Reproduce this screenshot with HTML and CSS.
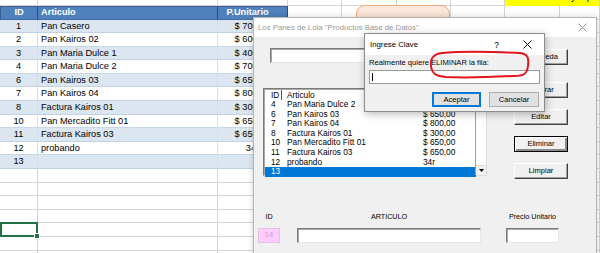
FILE: index.html
```html
<!DOCTYPE html>
<html lang="es">
<head>
  <meta charset="UTF-8">
  <meta name="viewport" content="width=device-width, initial-scale=1.0">
  <title>Los Panes de Lola - Productos</title>
  <link rel="stylesheet" href="styles.css">
</head>
<body>

  <!-- Hoja de calculo -->
  <div class="sheet">
    <div class="row top">
      <div class="cell"></div><div class="cell"></div><div class="cell"></div>
      <div class="cell"></div><div class="cell"></div><div class="cell"></div>
      <div class="cell"></div>
      <div class="cell yellow"><span>y p</span></div>
    </div>
    <div class="row head">
      <div class="cell id">ID</div><div class="cell art">Articulo</div><div class="cell pr">P.Unitario</div>
      <div class="cell"></div><div class="cell"></div><div class="cell"></div>
      <div class="cell"></div><div class="cell"></div><div class="cell"></div>
    </div>
    <div class="row band">
      <div class="cell id">1</div><div class="cell art">Pan Casero</div><div class="cell pr">$ 700,00</div>
      <div class="cell"></div><div class="cell"></div><div class="cell"></div><div class="cell"></div><div class="cell"></div><div class="cell"></div>
    </div>
    <div class="row">
      <div class="cell id">2</div><div class="cell art">Pan Kairos 02</div><div class="cell pr">$ 600,00</div>
      <div class="cell"></div><div class="cell"></div><div class="cell"></div><div class="cell"></div><div class="cell"></div><div class="cell"></div>
    </div>
    <div class="row band">
      <div class="cell id">3</div><div class="cell art">Pan Maria Dulce 1</div><div class="cell pr">$ 400,00</div>
      <div class="cell"></div><div class="cell"></div><div class="cell"></div><div class="cell"></div><div class="cell"></div><div class="cell"></div>
    </div>
    <div class="row">
      <div class="cell id">4</div><div class="cell art">Pan Maria Dulce 2</div><div class="cell pr">$ 700,00</div>
      <div class="cell"></div><div class="cell"></div><div class="cell"></div><div class="cell"></div><div class="cell"></div><div class="cell"></div>
    </div>
    <div class="row band">
      <div class="cell id">6</div><div class="cell art">Pan Kairos 03</div><div class="cell pr">$ 650,00</div>
      <div class="cell"></div><div class="cell"></div><div class="cell"></div><div class="cell"></div><div class="cell"></div><div class="cell"></div>
    </div>
    <div class="row">
      <div class="cell id">7</div><div class="cell art">Pan Kairos 04</div><div class="cell pr">$ 800,00</div>
      <div class="cell"></div><div class="cell"></div><div class="cell"></div><div class="cell"></div><div class="cell"></div><div class="cell"></div>
    </div>
    <div class="row band">
      <div class="cell id">8</div><div class="cell art">Factura Kairos 01</div><div class="cell pr">$ 300,00</div>
      <div class="cell"></div><div class="cell"></div><div class="cell"></div><div class="cell"></div><div class="cell"></div><div class="cell"></div>
    </div>
    <div class="row">
      <div class="cell id">10</div><div class="cell art">Pan Mercadito Fitt 01</div><div class="cell pr">$ 650,00</div>
      <div class="cell"></div><div class="cell"></div><div class="cell"></div><div class="cell"></div><div class="cell"></div><div class="cell"></div>
    </div>
    <div class="row band">
      <div class="cell id">11</div><div class="cell art">Factura Kairos 03</div><div class="cell pr">$ 650,00</div>
      <div class="cell"></div><div class="cell"></div><div class="cell"></div><div class="cell"></div><div class="cell"></div><div class="cell"></div>
    </div>
    <div class="row">
      <div class="cell id">12</div><div class="cell art">probando</div><div class="cell pr">34r</div>
      <div class="cell"></div><div class="cell"></div><div class="cell"></div><div class="cell"></div><div class="cell"></div><div class="cell"></div>
    </div>
    <div class="row band">
      <div class="cell id">13</div><div class="cell art"></div><div class="cell pr"></div>
      <div class="cell"></div><div class="cell"></div><div class="cell"></div><div class="cell"></div><div class="cell"></div><div class="cell"></div>
    </div>
    <div class="row empty">
      <div class="cell"></div><div class="cell"></div><div class="cell"></div><div class="cell"></div><div class="cell"></div><div class="cell"></div><div class="cell"></div><div class="cell"></div><div class="cell"></div>
    </div>
    <div class="row empty">
      <div class="cell"></div><div class="cell"></div><div class="cell"></div><div class="cell"></div><div class="cell"></div><div class="cell"></div><div class="cell"></div><div class="cell"></div><div class="cell"></div>
    </div>
    <div class="row empty">
      <div class="cell"></div><div class="cell"></div><div class="cell"></div><div class="cell"></div><div class="cell"></div><div class="cell"></div><div class="cell"></div><div class="cell"></div><div class="cell"></div>
    </div>
    <div class="row empty">
      <div class="cell"></div><div class="cell"></div><div class="cell"></div><div class="cell"></div><div class="cell"></div><div class="cell"></div><div class="cell"></div><div class="cell"></div><div class="cell"></div>
    </div>
    <div class="row empty">
      <div class="cell selected"></div><div class="cell"></div><div class="cell"></div><div class="cell"></div><div class="cell"></div><div class="cell"></div><div class="cell"></div><div class="cell"></div><div class="cell"></div>
    </div>
    <div class="row empty">
      <div class="cell"></div><div class="cell"></div><div class="cell"></div><div class="cell"></div><div class="cell"></div><div class="cell"></div><div class="cell"></div><div class="cell"></div><div class="cell"></div>
    </div>
    <div class="row empty">
      <div class="cell"></div><div class="cell"></div><div class="cell"></div><div class="cell"></div><div class="cell"></div><div class="cell"></div><div class="cell"></div><div class="cell"></div><div class="cell"></div>
    </div>
  </div>

  <!-- Forma (boton de la hoja) -->
  <div class="shape-btn"></div>

  <!-- UserForm principal -->
  <div class="form">
    <div class="form-title">
      <span>Los Panes de Lola "Productos Base de Datos"</span>
      <svg class="close" width="9" height="9" viewBox="0 0 9 9"><path d="M0.5 0.5L8.5 8.5M8.5 0.5L0.5 8.5" stroke="#9a9a9a" stroke-width="1"/></svg>
    </div>
    <div class="form-body">
      <div class="form-top">
        <div class="form-left">
          <div class="textbox search"></div>
          <div class="listbox">
            <div class="lb-head"><span class="c-id">ID</span><span class="c-art">Articulo</span></div>
            <div class="lb-row"><span class="c-id">4</span><span class="c-art">Pan Maria Dulce 2</span><span class="c-pr">$ 700,00</span></div>
            <div class="lb-row"><span class="c-id">6</span><span class="c-art">Pan Kairos 03</span><span class="c-pr">$ 650,00</span></div>
            <div class="lb-row"><span class="c-id">7</span><span class="c-art">Pan Kairos 04</span><span class="c-pr">$ 800,00</span></div>
            <div class="lb-row"><span class="c-id">8</span><span class="c-art">Factura Kairos 01</span><span class="c-pr">$ 300,00</span></div>
            <div class="lb-row"><span class="c-id">10</span><span class="c-art">Pan Mercadito Fitt 01</span><span class="c-pr">$ 650,00</span></div>
            <div class="lb-row"><span class="c-id">11</span><span class="c-art">Factura Kairos 03</span><span class="c-pr">$ 650,00</span></div>
            <div class="lb-row"><span class="c-id">12</span><span class="c-art">probando</span><span class="c-pr">34r</span></div>
            <div class="lb-row active"><span class="c-id">13</span><span class="c-art"></span><span class="c-pr"></span></div>
            <div class="lb-scroll">
              <div class="lb-arrow">
                <svg width="5" height="3" viewBox="0 0 5 3"><path d="M0 0H5L2.5 3Z" fill="#000"/></svg>
              </div>
            </div>
          </div>
        </div>
        <div class="form-buttons">
          <div class="btn first">Búsqueda</div>
          <div class="btn">Mostrar</div>
          <div class="btn">Editar</div>
          <div class="btn default">Eliminar</div>
          <div class="btn">Limpiar</div>
        </div>
      </div>
      <div class="form-bottom">
        <div class="field f-id"><div class="label">ID</div><div class="textbox pink">14</div></div>
        <div class="field f-art"><div class="label">ARTICULO</div><div class="textbox"></div></div>
        <div class="field f-pr"><div class="label">Precio Unitario</div><div class="textbox"></div></div>
      </div>
    </div>
  </div>

  <!-- InputBox "Ingrese Clave" -->
  <div class="prompt">
    <div class="prompt-title">
      <span>Ingrese Clave</span>
      <span class="help">?</span>
      <svg class="close" width="9" height="9" viewBox="0 0 9 9"><path d="M0.5 0.5L8.5 8.5M8.5 0.5L0.5 8.5" stroke="#111" stroke-width="1"/></svg>
    </div>
    <div class="prompt-body">
      <div class="prompt-text">Realmente quiere ELIMINAR la fila:</div>
      <div class="prompt-input"><span class="caret"></span></div>
      <div class="prompt-buttons">
        <div class="pbtn ok">Aceptar</div>
        <div class="pbtn">Cancelar</div>
      </div>
    </div>
  </div>

  <!-- Marca roja a mano -->
  <svg class="mark" width="104" height="30" viewBox="0 0 104 30">
    <path d="M14 3 C35 1 70 2 92 3 C100 4 101 8 100 16 C99 24 96 26 86 26 C65 27 35 28 18 27 C8 26 4 24 3 16 C2 9 5 4 14 3 Z" fill="none" stroke="#e2141c" stroke-width="2"/>
  </svg>

</body>
</html>
```

FILE: styles.css
```css
/* Basic Styles */
* {
  margin: 0;
  padding: 0;
  box-sizing: border-box;
}

body {
  width: 600px;
  height: 253px;
  overflow: hidden;
  position: relative;
  background-color: #fff;
  font-family: 'Liberation Sans', Arial, sans-serif;
}

/* Sheet */
.sheet {
  font-size: 9.2px;
  color: #000;
}

.row {
  display: grid;
  grid-template-columns: 38px 180px 70px 54px 55px 54px 54px 55px 40px;
  height: 13.6px;
}

.row.top {
  height: 6px;
}

.row.head {
  height: 13.5px;
}

.cell {
  border-right: 1px solid #d4d4d4;
  border-bottom: 1px solid #d4d4d4;
  overflow: hidden;
  white-space: nowrap;
  line-height: 12.6px;
  padding: 0 3px;
}

.cell.yellow {
  grid-column: span 2;
  background-color: #ffff00;
  position: relative;
  border-bottom: none;
}

/* only the descenders of the cell text are visible */
.cell.yellow span {
  position: absolute;
  left: 66px;
  top: -8px;
  font-size: 10px;
  line-height: 10px;
  word-spacing: 8px;
}

.cell.id {
  text-align: center;
}

.cell.pr {
  text-align: center;
}

.row .cell.id,
.row .cell.art,
.row .cell.pr {
  border-bottom-color: #c8d6e8;
  border-right-color: #d6dee9;
}

.band .cell.id,
.band .cell.art,
.band .cell.pr {
  background-color: #dce6f1;
  border-bottom-color: #c2d2e6;
}

.head .cell.id,
.head .cell.art,
.head .cell.pr {
  background-color: #4f81bd;
  color: #fff;
  font-weight: bold;
  border-top: 1px solid #3a5f8e;
  border-right: 1px solid #2e4d74;
  border-bottom: 1px solid #3f6ca2;
  line-height: 11.5px;
}

.head .cell.id {
  border-left: 1px solid #3a5f8e;
}

.head .cell.pr {
  padding-left: 0;
  padding-right: 10px;
}

.cell.selected {
  position: relative;
  overflow: visible;
}

.cell.selected::before {
  content: "";
  position: absolute;
  left: 0;
  top: -1px;
  right: -1px;
  bottom: -1px;
  border: 2px solid #217346;
}

.cell.selected::after {
  content: "";
  position: absolute;
  right: -3px;
  bottom: -3px;
  width: 4px;
  height: 4px;
  background-color: #217346;
  border: 1px solid #fff;
}

/* Shape button on the sheet */
.shape-btn {
  position: absolute;
  left: 356px;
  top: 5px;
  width: 94px;
  height: 26px;
  border: 1px solid #f1a873;
  border-radius: 9px;
  background: linear-gradient(#fbeadf, #f9d9c4);
}

/* Main UserForm */
.form {
  position: absolute;
  left: 253px;
  top: 17px;
  width: 344px;
  height: 246px;
  background-color: #f0f0f0;
  border: 1px solid #b5b5b5;
  box-shadow: 0 0 6px rgba(0, 0, 0, 0.18);
}

.form-title {
  height: 19px;
  background-color: #fff;
  display: flex;
  align-items: center;
  padding-left: 4px;
  font-size: 7.8px;
  color: #9a9a9a;
}

.form-title .close {
  margin-left: auto;
  margin-right: 9px;
}

.form-body {
  padding-top: 11px;
  font-size: 7.5px;
}

.form-top {
  display: flex;
}

.form-left {
  width: 233px;
  padding-left: 9px;
}

.textbox {
  background-color: #fff;
  height: 15px;
  border-top: 1px solid #7a7a7a;
  border-left: 1px solid #7a7a7a;
  border-right: 1px solid #e6e6e6;
  border-bottom: 1px solid #e6e6e6;
  box-shadow: inset 1px 1px 0 #a9a9a9;
}

.textbox.search {
  width: 190px;
  margin-left: 7px;
}

.textbox.pink {
  background-color: #ffccff;
  color: #c99bc9;
  text-align: center;
  font-size: 7.5px;
  line-height: 12px;
  border-color: #e4c2e4;
  box-shadow: none;
}

/* Listbox */
.listbox {
  position: relative;
  margin-top: 25px;
  width: 224px;
  height: 88px;
  background-color: #fff;
  border-top: 1px solid #7a7a7a;
  border-left: 1px solid #7a7a7a;
  border-right: 1px solid #dcdcdc;
  border-bottom: 1px solid #dcdcdc;
  box-shadow: inset 1px 1px 0 #a9a9a9;
  padding-top: 1px;
  font-size: 8.3px;
}

.lb-head,
.lb-row {
  display: flex;
  height: 9.6px;
  line-height: 9.6px;
  padding-left: 7px;
  width: 212px;
  white-space: nowrap;
}

.lb-head {
  height: 10px;
  line-height: 10px;
}

.c-id {
  width: 16px;
}

.c-art {
  width: 136px;
}

.lb-head .c-id {
  border-right: 1px solid #555;
  width: 11px;
  margin-right: 5px;
}

.lb-row.active {
  background-color: #0078d7;
  color: #fff;
  margin-left: 1px;
  width: 211px;
  padding-left: 6px;
}

.lb-scroll {
  position: absolute;
  right: 0;
  top: 1px;
  bottom: 0;
  width: 11px;
  border-left: 1px solid #a0a0a0;
  display: flex;
  flex-direction: column;
  justify-content: flex-end;
}

.lb-arrow {
  height: 10px;
  display: flex;
  align-items: center;
  justify-content: center;
  background-color: #f0f0f0;
  border-top: 1px solid #dadada;
}

/* Buttons column */
.form-buttons {
  margin-left: 27px;
  padding-top: 1px;
  display: flex;
  flex-direction: column;
  gap: 11px;
}

.btn {
  width: 54px;
  height: 16px;
  line-height: 13px;
  text-align: center;
  background-color: #f0f0f0;
  border-top: 1px solid #fff;
  border-left: 1px solid #fff;
  border-right: 1px solid #404040;
  border-bottom: 1px solid #404040;
  box-shadow: inset -1px -1px 0 #a0a0a0;
  color: #000;
}

.btn.first {
  margin-bottom: 6px;
}

.btn.default {
  border: 1px solid #000;
  box-shadow: inset 1px 1px 0 #fff, inset -2px -2px 0 #8a8a8a;
}

/* Bottom fields */
.form-bottom {
  display: flex;
  margin-top: 33px;
  padding-left: 4px;
  font-size: 7.2px;
}

.field .label {
  height: 10px;
  line-height: 10px;
  text-align: center;
  margin-bottom: 6px;
  white-space: nowrap;
}

.f-id {
  width: 22px;
}

.f-art {
  width: 184px;
  margin-left: 17px;
}

.f-pr {
  width: 53px;
  margin-left: 25px;
}

/* InputBox */
.prompt {
  position: absolute;
  left: 364px;
  top: 33px;
  width: 181px;
  height: 79px;
  background-color: #f0f0f0;
  border: 1px solid #8c8c8c;
  box-shadow: 1px 2px 8px rgba(0, 0, 0, 0.28);
  font-size: 7.6px;
  color: #000;
}

.prompt-title {
  height: 21px;
  background-color: #fff;
  display: flex;
  align-items: center;
  padding-left: 5px;
  font-size: 7.8px;
}

.prompt-title .help {
  margin-left: auto;
  font-size: 8.5px;
}

.prompt-title .close {
  margin-left: 24px;
  margin-right: 12px;
}

.prompt-body {
  padding: 3px 5px 0 4px;
}

.prompt-text {
  height: 10px;
  line-height: 10px;
  white-space: nowrap;
}

.prompt-input {
  margin-top: 2px;
  height: 14px;
  width: 171px;
  background-color: #fff;
  border: 1px solid #9a9a9a;
  padding: 2px 0 0 2px;
}

.caret {
  display: block;
  width: 1px;
  height: 8px;
  background-color: #000;
}

.prompt-buttons {
  display: flex;
  justify-content: flex-end;
  gap: 8px;
  margin-top: 8px;
}

.pbtn {
  width: 50px;
  height: 15px;
  line-height: 13px;
  text-align: center;
  background-color: #e1e1e1;
  border: 1px solid #adadad;
}

.pbtn.ok {
  width: 49px;
  border: 1px solid #0078d7;
  box-shadow: inset 0 0 0 1px #0078d7;
}

/* Red marker */
.mark {
  position: absolute;
  left: 428px;
  top: 50px;
}
```
